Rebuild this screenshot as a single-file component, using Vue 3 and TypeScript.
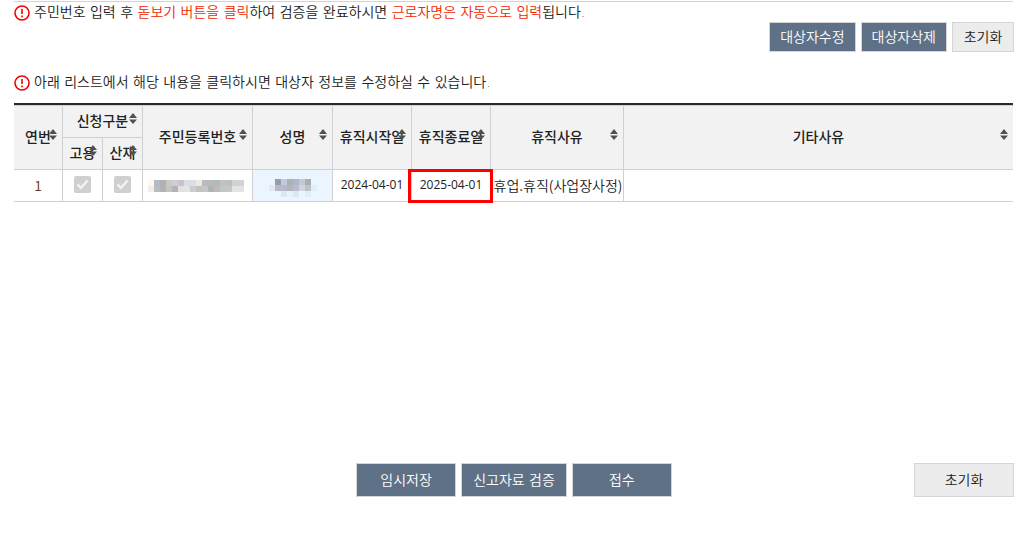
<script setup lang="ts">
import { ref } from 'vue'

type Mosaic = { width: number; height: number; rows: string[][] }

const sorted = ref('')
const sortBy = (key: string) => {
  sorted.value = key
}

const idMosaic: Mosaic = {
  width: 96,
  height: 12,
  rows: [
    ['#fdf9ef', '#b3bac6', '#adb2b9', '#cbc9bd', '#cfcfd0', '#cbc0cc', '#dbdfe5', '#d8e0e4', '#eaebe6', '#b9babb', '#b9babb', '#b5b8b9', '#c0c2c3', '#bcc1c0', '#d0d1d2', '#d4d3d4'],
    ['#f5ede8', '#b6bfc1', '#b2b5b6', '#c5c5bf', '#b1b3ba', '#e6dfdf', '#dde6e8', '#cbcccd', '#c2c1be', '#c6c6c6', '#adb6b5', '#c2b9b9', '#c2c6c9', '#c6c7c9', '#e3e3e4', '#e3e3e4'],
  ],
}

const nameMosaic: Mosaic = {
  width: 48,
  height: 18,
  rows: [
    ['#eaf5ff', '#9c9da4', '#c5c9e0', '#adb1b3', '#b3b5ce', '#c5c9d0', '#a9afb5', '#eaf5ff'],
    ['#e2e9f0', '#b8b9c8', '#b5b8cf', '#b0b5b6', '#b8bccf', '#cfd3dc', '#bac4ca', '#e2edf7'],
    ['#eaf5ff', '#eaf5ff', '#dde6f4', '#e8f2fb', '#dde6f4', '#eaf5ff', '#e2edf6', '#eaf5ff'],
  ],
}

const columns = [
  { key: 'ssn', label: '주민등록번호' },
  { key: 'name', label: '성명' },
  { key: 'start', label: '휴직시작일' },
  { key: 'end', label: '휴직종료일' },
  { key: 'reason', label: '휴직사유' },
  { key: 'etc', label: '기타사유' },
]
</script>

<template>
  <main class="page">
    <section class="intro">
      <p class="notice">
        <svg class="alert" viewBox="0 0 16 16" aria-hidden="true">
          <circle cx="8" cy="8" r="7" />
          <path d="M8 4v5M8 10.5v1.7" />
        </svg>
        <span>주민번호 입력 후 <em>돋보기 버튼을 클릭</em>하여 검증을 완료하시면 <em>근로자명은 자동으로 입력</em>됩니다.</span>
      </p>
      <div class="tools">
        <button type="button" class="btn dark">대상자수정</button>
        <button type="button" class="btn dark">대상자삭제</button>
        <button type="button" class="btn light">초기화</button>
      </div>
    </section>

    <p class="notice">
      <svg class="alert" viewBox="0 0 16 16" aria-hidden="true">
        <circle cx="8" cy="8" r="7" />
        <path d="M8 4v5M8 10.5v1.7" />
      </svg>
      <span>아래 리스트에서 해당 내용을 클릭하시면 대상자 정보를 수정하실 수 있습니다.</span>
    </p>

    <div class="list">
      <table>
        <colgroup>
          <col class="w-no" />
          <col class="w-check" />
          <col class="w-check" />
          <col class="w-ssn" />
          <col class="w-name" />
          <col class="w-date" />
          <col class="w-date" />
          <col class="w-reason" />
          <col />
        </colgroup>
        <thead>
          <tr>
            <th rowspan="2" @click="sortBy('no')">
              연번<svg class="sort" viewBox="0 0 8 11" aria-hidden="true"><path d="M0 5 4 0l4 5zM0 6.5h8L4 11z" /></svg>
            </th>
            <th colspan="2" @click="sortBy('type')">
              신청구분<svg class="sort" viewBox="0 0 8 11" aria-hidden="true"><path d="M0 5 4 0l4 5zM0 6.5h8L4 11z" /></svg>
            </th>
            <th v-for="c in columns" :key="c.key" rowspan="2" @click="sortBy(c.key)">
              {{ c.label }}<svg class="sort" viewBox="0 0 8 11" aria-hidden="true"><path d="M0 5 4 0l4 5zM0 6.5h8L4 11z" /></svg>
            </th>
          </tr>
          <tr>
            <th id="emp" class="inner" @click="sortBy('emp')">
              고용<svg class="sort" viewBox="0 0 8 11" aria-hidden="true"><path d="M0 5 4 0l4 5zM0 6.5h8L4 11z" /></svg>
            </th>
            <th id="ind" class="inner" @click="sortBy('ind')">
              산재<svg class="sort" viewBox="0 0 8 11" aria-hidden="true"><path d="M0 5 4 0l4 5zM0 6.5h8L4 11z" /></svg>
            </th>
          </tr>
        </thead>
        <tbody>
          <tr>
            <td class="no">1</td>
            <td>
              <span class="check">
                <input type="checkbox" aria-labelledby="emp" checked disabled />
                <svg viewBox="0 0 17 17" aria-hidden="true"><path d="M3.5 8.5 7 12l6.5-7.5" /></svg>
              </span>
            </td>
            <td>
              <span class="check">
                <input type="checkbox" aria-labelledby="ind" checked disabled />
                <svg viewBox="0 0 17 17" aria-hidden="true"><path d="M3.5 8.5 7 12l6.5-7.5" /></svg>
              </span>
            </td>
            <td class="ssn">
              <svg class="mosaic" :width="idMosaic.width" :height="idMosaic.height" shape-rendering="crispEdges" aria-hidden="true">
                <template v-for="(row, y) in idMosaic.rows" :key="y">
                  <rect v-for="(fill, x) in row" :key="x" :x="x * 6" :y="y * 6" width="6" height="6" :fill="fill" />
                </template>
              </svg>
            </td>
            <td class="name">
              <svg class="mosaic" :width="nameMosaic.width" :height="nameMosaic.height" shape-rendering="crispEdges" aria-hidden="true">
                <template v-for="(row, y) in nameMosaic.rows" :key="y">
                  <rect v-for="(fill, x) in row" :key="x" :x="x * 6" :y="y * 6" width="6" height="6" :fill="fill" />
                </template>
              </svg>
            </td>
            <td class="date">2024-04-01</td>
            <td class="date marked">2025-04-01</td>
            <td class="reason">휴업.휴직(사업장사정)</td>
            <td></td>
          </tr>
        </tbody>
      </table>
    </div>

    <footer class="actions">
      <div class="main-actions">
        <button type="button" class="btn dark big">임시저장</button>
        <button type="button" class="btn dark big">신고자료 검증</button>
        <button type="button" class="btn dark big">접수</button>
      </div>
      <button type="button" class="btn light big">초기화</button>
    </footer>
  </main>
</template>

<style>
body {
  background: #fff;
}
</style>

<style scoped>
.page {
  padding: 1px 20px 0 14px;
  color: #222;
  font: 350 14px/20px "Noto Sans CJK KR", sans-serif;
}

.intro {
  height: 70px;
  border-top: 1px solid #d3d3d3;
}

.notice {
  display: flex;
  align-items: center;
  gap: 4px;
  margin: 0;
  height: 20px;
  font-family: "DejaVu Sans", "Noto Sans CJK KR", sans-serif;
}

.notice em {
  color: #f02800;
  font-style: normal;
}

.alert {
  width: 16px;
  height: 16px;
  flex: none;
  margin-top: 2px;
  fill: none;
  stroke: #f50000;
  stroke-width: 1.6;
}

.tools {
  display: flex;
  justify-content: flex-end;
  gap: 5px;
  margin-right: -1px;
}

.btn {
  box-sizing: border-box;
  min-width: 62px;
  height: 30px;
  padding: 0 10px;
  border: 1px solid #d5d5d5;
  font: 350 14px/20px "DejaVu Sans", "Noto Sans CJK KR", sans-serif;
  white-space: nowrap;
  cursor: pointer;
}

.dark {
  background: #5f7186;
  color: #fff;
}

.light {
  background: #ececec;
  color: #222;
}

.big {
  min-width: 100px;
  height: 34px;
  padding: 0 11px;
}

.list {
  height: 360px;
  margin-top: 11px;
}

table {
  width: 100%;
  table-layout: fixed;
  border-collapse: separate;
  border-spacing: 0;
  border-top: 2px solid #2b2b2b;
}

.w-no {
  width: 49px;
}

.w-check {
  width: 40px;
}

.w-ssn {
  width: 110px;
}

.w-name {
  width: 80px;
}

.w-date {
  width: 79px;
}

.w-reason {
  width: 133px;
}

th,
td {
  position: relative;
  box-sizing: border-box;
  height: 32px;
  padding: 0 0 2px;
  border-right: 1px solid #d0d0d3;
  border-bottom: 1px solid #d0d0d3;
  text-align: center;
  white-space: nowrap;
}

th {
  padding-bottom: 4px;
  background: #f2f2f2;
  font-weight: 500;
  cursor: pointer;
}

thead tr:first-child th {
  height: 33px;
  border-top: 1px solid #d0d0d3;
}

th:last-child:not(.inner),
td:last-child {
  border-right: 0;
}

.sort {
  position: absolute;
  top: 50%;
  right: 5px;
  width: 8px;
  height: 11px;
  margin-top: -9px;
  fill: #505050;
}

.no {
  color: #6b3a10;
}

.check {
  display: grid;
  justify-content: center;
}

.check input,
.check svg {
  grid-area: 1 / 1;
  width: 17px;
  height: 17px;
  margin: 0;
}

.check input {
  appearance: none;
  border-radius: 2px;
  background: #cfcfcf;
}

.check svg {
  z-index: 1;
  fill: none;
  stroke: #f2f2f2;
  stroke-width: 2.5;
}

.mosaic {
  display: block;
  margin: 0 auto;
}

.ssn {
  padding: 0 4px 0 0;
}

.name {
  padding: 4px 0 0;
  background: #eaf5ff;
}

.date {
  font-family: "Open Sans", sans-serif;
  font-size: 12px;
  font-weight: 400;
}

.reason {
  padding-left: 2px;
}

.marked::after {
  content: "";
  position: absolute;
  inset: -1px -3px -2px -4px;
  z-index: 2;
  border: 3px solid #f00;
}

.actions {
  display: grid;
  grid-template-columns: 1fr auto 1fr;
  align-items: center;
  margin-right: -1px;
}

.main-actions {
  display: flex;
  grid-column: 2;
  gap: 5px;
}

.actions > .btn {
  justify-self: end;
}
</style>
